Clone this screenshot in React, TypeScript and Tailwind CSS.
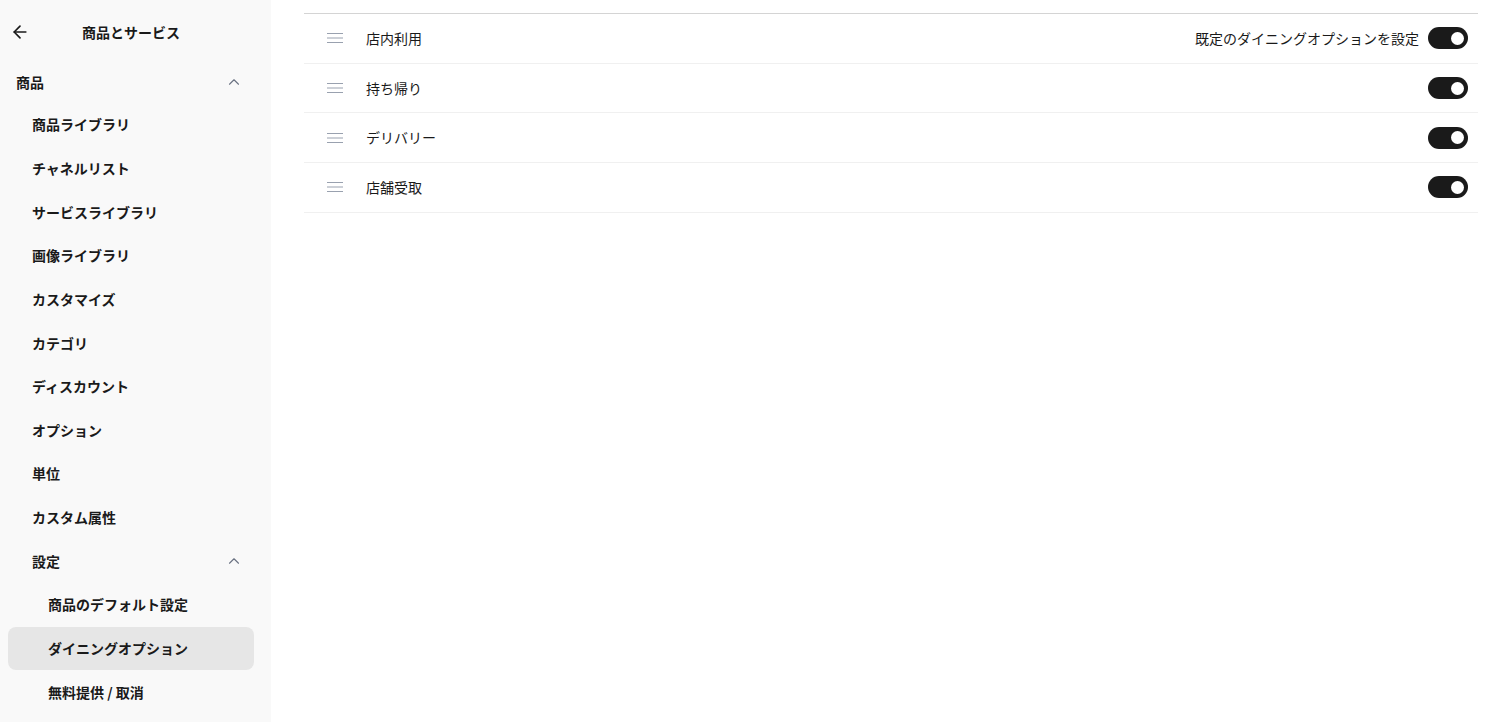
import { ArrowLeft, ChevronUp } from "lucide-react";

const navItems = [
  "商品ライブラリ",
  "チャネルリスト",
  "サービスライブラリ",
  "画像ライブラリ",
  "カスタマイズ",
  "カテゴリ",
  "ディスカウント",
  "オプション",
  "単位",
  "カスタム属性",
];

const subItems = ["商品のデフォルト設定", "ダイニングオプション", "無料提供 / 取消"];

const options = ["店内利用", "持ち帰り", "デリバリー", "店舗受取"];

function DragHandle() {
  return (
    <svg width="16" height="12" viewBox="0 0 16 12" className="text-gray-400">
      <line x1="0" y1="1.5" x2="16" y2="1.5" stroke="currentColor" strokeWidth="1" />
      <line x1="0" y1="6" x2="16" y2="6" stroke="currentColor" strokeWidth="1" />
      <line x1="0" y1="10.5" x2="16" y2="10.5" stroke="currentColor" strokeWidth="1" />
    </svg>
  );
}

function Toggle() {
  return (
    <div className="w-[40px] h-[22px] rounded-full bg-[#1a1a1a] flex items-center justify-end pr-[4px]">
      <div className="w-[13px] h-[13px] rounded-full bg-white" />
    </div>
  );
}

export default function App() {
  return (
    <div
      className="flex h-[722px] w-[1500px] bg-white text-[#1a1a1a] overflow-hidden"
      style={{ fontFamily: '"Noto Sans CJK JP", "Noto Sans", sans-serif' }}
    >
      {/* sidebar */}
      <div className="w-[271px] shrink-0 bg-[#f9f9f9] flex flex-col">
        <div className="h-[64px] flex items-center pl-[10px] pr-4">
          <ArrowLeft size={20} strokeWidth={2} className="text-[#1a1a1a]" />
          <div className="flex-1 text-center text-[14px] font-bold pr-[31px] pl-[8px]">
            商品とサービス
          </div>
        </div>
        <div className="h-[36px] mb-[3px] flex items-center justify-between pl-[16px] pr-[28px] text-[14px] font-bold">
          <span>商品</span>
          <ChevronUp size={18} strokeWidth={1.5} className="text-gray-500" />
        </div>
        {navItems.map((item) => (
          <div
            key={item}
            className="h-[43.65px] flex items-center pl-[32px] text-[14px] font-bold"
          >
            {item}
          </div>
        ))}
        <div className="h-[43.65px] flex items-center justify-between pl-[32px] pr-[28px] text-[14px] font-bold">
          <span>設定</span>
          <ChevronUp size={18} strokeWidth={1.5} className="text-gray-500" />
        </div>
        {subItems.map((item, i) => (
          <div
            key={item}
            className={
              "h-[43.65px] mx-[8px] w-[246px] rounded-lg flex items-center pl-[40px] text-[14px] font-bold " +
              (i === 1 ? "bg-[#e6e6e6]" : "")
            }
          >
            {item}
          </div>
        ))}
      </div>

      {/* main */}
      <div className="flex-1 pl-[33px] pr-[22px] pt-[13px]">
        <div className="border-t border-[#d4d4d4]">
          {options.map((opt, i) => (
            <div
              key={opt}
              className="h-[49.7px] flex items-center border-b border-[#f0f0f0] pl-[23px] pr-[10px]"
            >
              <DragHandle />
              <span className="ml-[23px] text-[14px] flex-1">{opt}</span>
              {i === 0 && (
                <span className="text-[14px] mr-[9px]">既定のダイニングオプションを設定</span>
              )}
              <Toggle />
            </div>
          ))}
        </div>
      </div>
    </div>
  );
}
